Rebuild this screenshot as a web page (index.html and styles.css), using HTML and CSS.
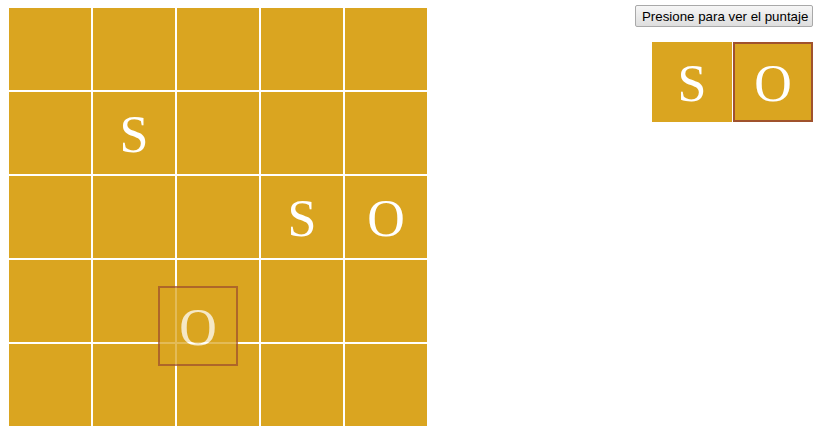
FILE: index.html
```html
<!DOCTYPE html>
<html lang="es">
<head>
<meta charset="utf-8">
<title>SOS</title>
<link rel="stylesheet" href="styles.css">
</head>
<body>
<div class="page">
  <div class="board-wrap">
    <div class="board">
      <div class="cell"></div><div class="cell"></div><div class="cell"></div><div class="cell"></div><div class="cell"></div>
      <div class="cell"></div><div class="cell">S</div><div class="cell"></div><div class="cell"></div><div class="cell"></div>
      <div class="cell"></div><div class="cell"></div><div class="cell"></div><div class="cell">S</div><div class="cell">O</div>
      <div class="cell"></div><div class="cell"></div><div class="cell"></div><div class="cell"></div><div class="cell"></div>
      <div class="cell"></div><div class="cell"></div><div class="cell"></div><div class="cell"></div><div class="cell"></div>
    </div>
    <div class="tile tile-selected ghost">O</div>
  </div>
  <div class="side">
    <button class="score-btn" type="button">Presione para ver el puntaje</button>
    <div class="pieces">
      <div class="tile">S</div>
      <div class="tile tile-selected">O</div>
    </div>
  </div>
</div>
</body>
</html>
```

FILE: styles.css
```css
html, body {
  margin: 0;
  padding: 0;
  background: #ffffff;
}

.page {
  display: flex;
  justify-content: space-between;
  align-items: flex-start;
  padding: 5px 5px 0 9px;
}

.board-wrap {
  position: relative;
  margin-top: 3px;
}

.board {
  display: grid;
  grid-template-columns: repeat(5, 82px);
  grid-auto-rows: 82px;
  gap: 2px;
}

.cell {
  box-sizing: border-box;
  padding-top: 4px;
  background: #daa520;
  color: #ffffff;
  font-family: "Liberation Serif", "Times New Roman", serif;
  font-size: 52px;
  line-height: 1;
  display: flex;
  align-items: center;
  justify-content: center;
}

.tile {
  box-sizing: border-box;
  width: 80px;
  height: 80px;
  padding-top: 4px;
  background: #daa520;
  color: #ffffff;
  font-family: "Liberation Serif", "Times New Roman", serif;
  font-size: 52px;
  line-height: 1;
  display: flex;
  align-items: center;
  justify-content: center;
}

.tile-selected {
  border: 2px solid #a0522d;
}

.ghost {
  position: absolute;
  left: 149px;
  top: 278px;
  opacity: 0.75;
}

.side {
  display: flex;
  flex-direction: column;
  align-items: flex-end;
}

.score-btn {
  font-family: "Liberation Sans", Arial, sans-serif;
  font-size: 13.3px;
  color: #000000;
  height: 22px;
  width: 178px;
  padding: 0 6px;
  border: 1px solid #a9a9a9;
  border-radius: 2px;
  background: linear-gradient(#f6f6f6, #dedede);
  white-space: nowrap;
}

.pieces {
  display: flex;
  gap: 1px;
  margin-top: 15px;
  align-items: flex-end;
}
```
